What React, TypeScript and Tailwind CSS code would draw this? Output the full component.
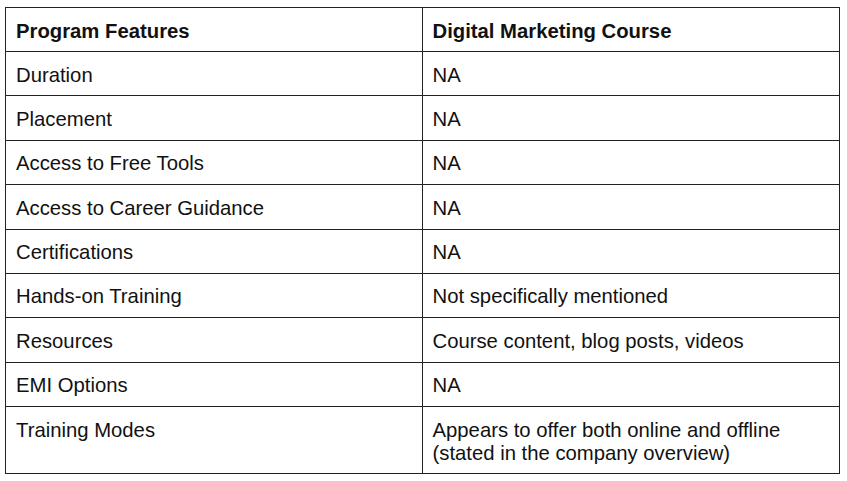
import React from "react";

const rows: [string, React.ReactNode][] = [
  ["Duration", "NA"],
  ["Placement", "NA"],
  ["Access to Free Tools", "NA"],
  ["Access to Career Guidance", "NA"],
  ["Certifications", "NA"],
  ["Hands-on Training", "Not specifically mentioned"],
  ["Resources", "Course content, blog posts, videos"],
  ["EMI Options", "NA"],
  [
    "Training Modes",
    <>
      Appears to offer both online and offline
      <br />
      (stated in the company overview)
    </>,
  ],
];

const cell = "border border-[#222] px-[10px] pt-[11.5px] pb-0 text-left align-top";

export default function App() {
  return (
    <div
      className="w-[847px] h-[481px] bg-white pt-[7px] pl-[5px]"
      style={{ fontFamily: '"Liberation Sans", Arial, sans-serif' }}
    >
      <table className="w-[835px] border-collapse text-[20.3px] leading-[23px] text-[#111]">
        <colgroup>
          <col className="w-[417px]" />
          <col className="w-[418px]" />
        </colgroup>
        <thead>
          <tr className="h-[44px]">
            <th className={cell + " font-bold"}>Program Features</th>
            <th className={cell + " font-bold"}>Digital Marketing Course</th>
          </tr>
        </thead>
        <tbody>
          {rows.map(([a, b], i) => (
            <tr key={i} className={i === rows.length - 1 ? "h-[67px]" : "h-[44.375px]"}>
              <td className={cell}>{a}</td>
              <td className={cell}>{b}</td>
            </tr>
          ))}
        </tbody>
      </table>
    </div>
  );
}
